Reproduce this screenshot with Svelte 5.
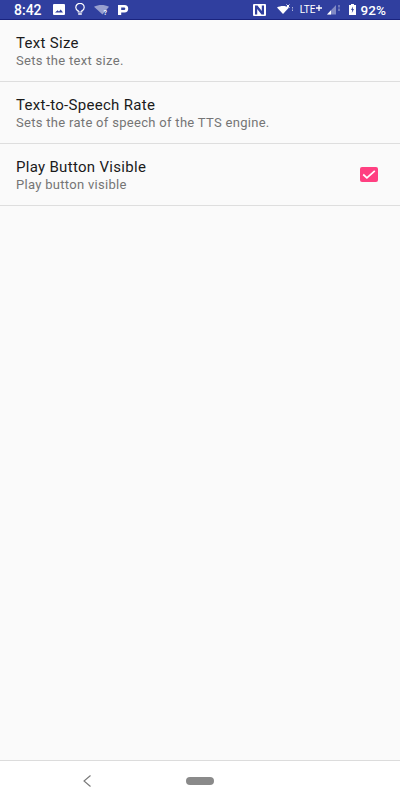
<script>
  const rows = [
    { t: 'Text Size', s: 'Sets the text size.' },
    { t: 'Text-to-Speech Rate', s: 'Sets the rate of speech of the TTS engine.' },
    { t: 'Play Button Visible', s: 'Play button visible', check: true }
  ];
</script>

<div class="page">
  <header class="status">
    <span class="time">8:42</span>
    <div class="left-icons">
      <svg width="12" height="11" viewBox="0 0 12 11"><path fill="#fff" fill-rule="evenodd" d="M1 0h10a1 1 0 0 1 1 1v9a1 1 0 0 1-1 1H1a1 1 0 0 1-1-1V1a1 1 0 0 1 1-1zM2 8.500h8L7.700 5.500 6 7.500 4.600 6.300z"/></svg>
      <svg width="10" height="13" viewBox="0 0 10 13"><path fill="none" stroke="#fff" stroke-width="1.200" d="M3.200 9V7.900C1.800 7.200.8 6 .8 4.500a4.200 4.200 0 0 1 8.400 0c0 1.500-1 2.700-2.400 3.400V9z"/><path stroke="#fff" stroke-width="1.500" d="M3.200 11h3.600"/></svg>
      <svg class="wifi-q" width="15" height="10" viewBox="0 0 15 10"><path fill="#fff" opacity=".5" d="M0 1.800C4.500-.6 10.500-.6 15 1.800L8.500 9.500z"/><text x="9.500" y="9.500" class="q">?</text></svg>
      <svg class="p" width="11" height="10" viewBox="0 0 11 10"><path fill="#fff" fill-rule="evenodd" d="M0 0h6.500a3.700 3.700 0 0 1 0 7.400H3.200V10H0zm3.200 2.500v2.400h2.900a1.200 1.200 0 0 0 0-2.400z"/></svg>
    </div>
    <div class="right-icons">
      <svg class="nfc" width="13" height="12" viewBox="0 0 13 12"><path fill="#fff" fill-rule="evenodd" d="M1 0h11a1 1 0 0 1 1 1v10a1 1 0 0 1-1 1H1a1 1 0 0 1-1-1V1a1 1 0 0 1 1-1zM2 1.500v9h2.200V5L8.500 10.500H11v-9H8.800V7L4.500 1.500z"/></svg>
      <svg class="wifi" width="17" height="11" viewBox="0 0 17 11"><path fill="#fff" d="M0 3.500c3.500-2 8.500-2 12 0L6 10z"/><path d="M9.500.5l3 3m0-3l-3 3" stroke="#fff" stroke-width="1"/><path stroke="#fff" opacity=".6" d="M15.500 3v1.500m0 1V7"/></svg>
      <span class="lte">LTE</span><svg class="plus" width="6" height="6" viewBox="0 0 6 6"><path stroke="#fff" stroke-width="1.300" d="M0 3h6M3 0v6"/></svg>
      <svg class="signal" width="14" height="11" viewBox="0 0 14 11"><path fill="#fff" d="M0 10.500L9 1v9.500z" opacity=".4"/><path fill="#fff" d="M0 10.500l4-4.200v4.200z"/><path stroke="#fff" opacity=".6" d="M12 1v2.500m0 1V7"/></svg>
      <svg class="battery" width="7" height="11" viewBox="0 0 7 11"><path fill="#fff" fill-rule="evenodd" d="M2 0h3v1h2v10H0V1h2zM4 2.500L2 6h1.200L2.800 9 5 5H3.800z"/></svg>
      <span class="pct">92%</span>
    </div>
  </header>

  <main class="list">
    {#each rows as r}
      <div class="row">
        <div class="txt">
          <div class="title">{r.t}</div>
          <div class="sub">{r.s}</div>
        </div>
        {#if r.check}
          <span class="box">
            <svg width="18" height="15" viewBox="0 0 18 15"><path fill="none" stroke="#fff" stroke-width="1.700" d="M3.200 7.500L6.900 10.800 14.800 3.800"/></svg>
          </span>
        {/if}
      </div>
    {/each}
  </main>

  <footer class="nav">
    <svg class="back" width="8" height="12" viewBox="0 0 8 12"><path fill="none" stroke="#777" stroke-width="1.100" d="M7.500.5L1 6l6.500 5.500"/></svg>
    <span class="pill"></span>
  </footer>
</div>

<style>
  :global(body) { margin: 0; }
  .page {
    width: 400px; height: 800px; display: flex; flex-direction: column;
    background: #fafafa; font-family: Roboto, sans-serif; overflow: hidden;
  }
  .status {
    height: 19px; flex: none; background: #303f9f; border-bottom: 1px solid #1a237e;
    display: flex; align-items: center; color: #fff; padding: 0 14px;
  }
  .time { font-size: 14px; font-weight: 500; letter-spacing: 0; width: 38.500px; flex: none; }
  .left-icons { display: flex; align-items: center; gap: 10px; }
  .wifi-q { margin-left: -1px; }
  .p { margin-left: -1px; }
  .q { font-size: 7px; fill: #fff; font-weight: 700; font-family: Roboto, sans-serif; }
  .right-icons { margin-left: auto; display: flex; align-items: center; }
  .nfc { margin-right: 11px; }
  .wifi { margin-right: 6px; }
  .lte { font-size: 10px; }
  .plus { margin: 0 0 3px 1px; }
  .signal { margin-left: 5px; }
  .battery { margin-left: 8px; }
  .pct { font-size: 13.500px; font-weight: 500; letter-spacing: .1px; margin-left: 4px; }
  .list { flex: 1; }
  .row {
    height: 61px; border-bottom: 1px solid #dedede; display: flex; align-items: center;
    padding: 0 22px 0 16px;
  }
  .txt { flex: 1; padding-top: 1px; }
  .title { font-size: 15px; line-height: 18px; color: #1b1b1b; letter-spacing: .3px; }
  .sub { font-size: 13px; line-height: 16px; margin-top: 1px; color: #757575; letter-spacing: .3px; }
  .box {
    width: 18px; height: 15px; background: #ff4081; border-radius: 2px;
    display: flex; align-items: center; justify-content: center;
  }
  .nav {
    height: 39px; flex: none; background: #fff; border-top: 1px solid #dcdcdc;
    display: flex; align-items: center; padding-left: 83px;
  }
  .back { flex: none; }
  .pill { width: 28px; height: 8px; border-radius: 4px; background: #8a8a8a; margin-left: 95px; }
</style>
